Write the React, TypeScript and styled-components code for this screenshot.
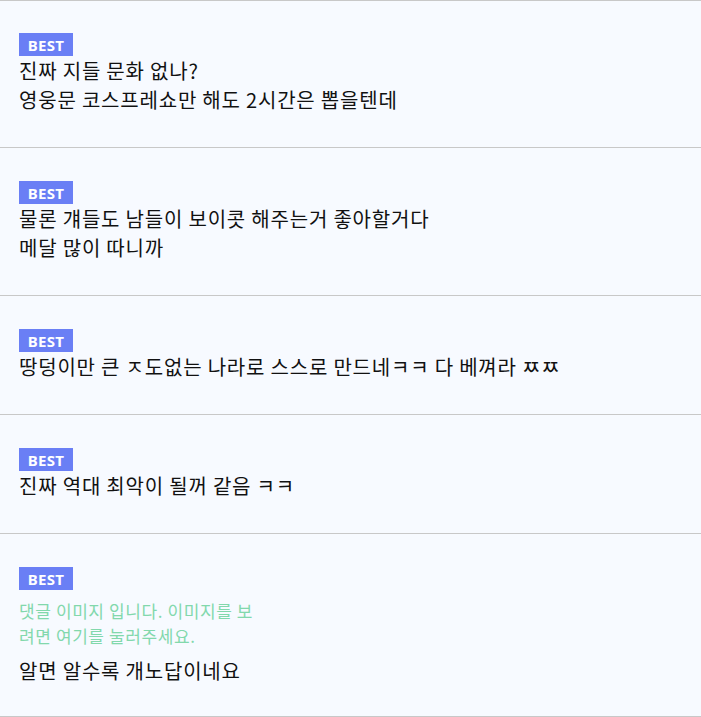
import styled, { createGlobalStyle } from 'styled-components';

const GlobalStyle = createGlobalStyle`
  html, body {
    margin: 0;
    padding: 0;
    background: #f7faff;
  }
  body {
    font-family: 'Noto Sans CJK KR', 'Noto Sans', sans-serif;
    color: #111;
  }
`;

interface Comment {
  id: number;
  lines: string[];
  image?: boolean;
}

const comments: Comment[] = [
  { id: 1, lines: ['진짜 지들 문화 없나?', '영웅문 코스프레쇼만 해도 2시간은 뽑을텐데'] },
  { id: 2, lines: ['물론 걔들도 남들이 보이콧 해주는거 좋아할거다', '메달 많이 따니까'] },
  { id: 3, lines: ['땅덩이만 큰 ㅈ도없는 나라로 스스로 만드네ㅋㅋ 다 베껴라 ㅉㅉ'] },
  { id: 4, lines: ['진짜 역대 최악이 될꺼 같음 ㅋㅋ'] },
  { id: 5, lines: ['알면 알수록 개노답이네요'], image: true },
];

export default function App() {
  return (
    <>
      <GlobalStyle />
      <List>
        {comments.map((c) => (
          <Item key={c.id} $image={!!c.image}>
            <Badge>BEST</Badge>
            {c.image && (
              <ImageNotice>댓글 이미지 입니다. 이미지를 보려면 여기를 눌러주세요.</ImageNotice>
            )}
            <Body $image={!!c.image}>
              {c.lines.map((l, i) => (
                <p key={i}>{l}</p>
              ))}
            </Body>
          </Item>
        ))}
      </List>
    </>
  );
}

const List = styled.ul`
  list-style: none;
  margin: 0;
  padding: 0;
  border-top: 1px solid #c8c8c8;
`;

const Item = styled.li<{ $image: boolean }>`
  display: flex;
  flex-direction: column;
  align-items: flex-start;
  padding: 33px 19px ${(p) => (p.$image ? '31px' : '33px')};
  border-bottom: 1px solid #c8c8c8;

  &:first-child {
    padding-top: 32px;
  }
`;

const Badge = styled.span`
  display: inline-flex;
  align-items: center;
  justify-content: center;
  width: 54px;
  height: 23px;
  background: #6a7ff5;
  color: #fff;
  font-family: 'Noto Sans', sans-serif;
  font-weight: 700;
  font-size: 15px;
  letter-spacing: 0.3px;
`;

const ImageNotice = styled.p`
  margin: 8px 0 0;
  width: 245px;
  color: #82d8ac;
  font-size: 17px;
  line-height: 25px;
  letter-spacing: 0.6px;
  word-break: break-all;
  cursor: pointer;
`;

const Body = styled.div<{ $image: boolean }>`
  margin-top: ${(p) => (p.$image ? '8px' : '0')};
  p {
    margin: 0;
    font-size: 20px;
    line-height: 29px;
    letter-spacing: 0.8px;
    color: #111;
  }
`;
